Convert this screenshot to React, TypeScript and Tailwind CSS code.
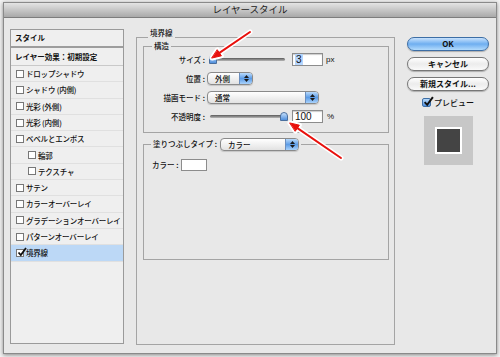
import type { ReactNode } from "react";

const items: { label: string; sub?: boolean; checked?: boolean }[] = [
  { label: "ドロップシャドウ" },
  { label: "シャドウ (内側)" },
  { label: "光彩 (外側)" },
  { label: "光彩 (内側)" },
  { label: "ベベルとエンボス" },
  { label: "輪郭", sub: true },
  { label: "テクスチャ", sub: true },
  { label: "サテン" },
  { label: "カラーオーバーレイ" },
  { label: "グラデーションオーバーレイ" },
  { label: "パターンオーバーレイ" },
  { label: "境界線", checked: true },
];

function Box({ checked }: { checked?: boolean }) {
  return (
    <span className="relative inline-block h-[8px] w-[8px] shrink-0 border border-[#777] bg-white">
      {checked && (
        <svg className="absolute -top-[3px] left-0 h-[10px] w-[10px]" viewBox="0 0 10 10">
          <path d="M1.5 5.5 L3.8 8 L9 1" fill="none" stroke="#111" strokeWidth="1.8" />
        </svg>
      )}
    </span>
  );
}

function Popup({ label, className }: { label: string; className: string }) {
  return (
    <div
      className={`flex h-[13px] items-stretch overflow-hidden rounded-[4px] border border-[#8a8a8a] bg-gradient-to-b from-white to-[#e2e2e2] shadow-[0_1px_1px_rgba(0,0,0,0.15)] ${className}`}
    >
      <span className="flex-1 whitespace-nowrap pl-[7px] text-[7.5px] font-medium leading-[11px]">{label}</span>
      <span className="flex w-[13px] flex-col items-center justify-center gap-[1px] border-l border-[#6b8fbf] bg-gradient-to-b from-[#b9dafb] via-[#5c9ce6] to-[#a9d2fb]">
        <svg width="5" height="3" viewBox="0 0 5 3">
          <path d="M0 3 L2.5 0 L5 3 Z" fill="#1a1a1a" />
        </svg>
        <svg width="5" height="3" viewBox="0 0 5 3">
          <path d="M0 0 L2.5 3 L5 0 Z" fill="#1a1a1a" />
        </svg>
      </span>
    </div>
  );
}

function Slider({ at }: { at: "start" | "end" }) {
  return (
    <div className="relative ml-[3px] h-[9px] w-[75px]">
      <div className="absolute left-0 right-0 top-[3px] h-[3px] rounded-full bg-gradient-to-b from-[#5a5a5a] to-[#b8b8b8]" />
      <div
        className={`absolute top-0 h-[9px] w-[8px] rounded-t-full rounded-b-[3px] border border-[#4a6f9e] bg-gradient-to-b from-[#c5e0fc] to-[#4f8fdc] ${at === "start" ? "left-[-1px]" : "right-[-3px]"}`}
      />
    </div>
  );
}

function Field({ value, selected }: { value: string; selected?: boolean }) {
  return (
    <div className="ml-[7px] flex h-[13px] w-[31px] items-center border border-[#8c8c8c] bg-white pl-[2px] shadow-[inset_0_1px_1px_rgba(0,0,0,0.2)] font-['Liberation_Sans',sans-serif] text-[10px] leading-[11px]">
      <span className={selected ? "bg-[#b5d5fd] px-[1px]" : ""}>{value}</span>
    </div>
  );
}

function Row({ label, children }: { label: string; children: ReactNode }) {
  return (
    <div className="flex h-[19px] items-center">
      <span className="w-[61px] shrink-0 whitespace-nowrap text-right text-[7.5px] font-medium">{label}</span>
      <div className="ml-[2px] flex items-center">{children}</div>
    </div>
  );
}

function PillButton({ children, primary }: { children: ReactNode; primary?: boolean }) {
  return (
    <div
      className={`flex h-[14px] w-[82px] items-center justify-center rounded-full border text-[8px] font-bold leading-none shadow-[0_1px_1px_rgba(0,0,0,0.25)] ${
        primary
          ? "border-[#3d6ea5] bg-gradient-to-b from-[#c8e2fc] via-[#6eaef0] to-[#b3dbfc]"
          : "border-[#777] bg-gradient-to-b from-white via-[#ececec] to-[#fafafa]"
      }`}
    >
      {children}
    </div>
  );
}

export default function App() {
  return (
    <div className="relative h-[357px] w-[500px] bg-[#f2f2f2] pl-[3px] pt-[2px] font-['Noto_Sans_CJK_JP',sans-serif] text-[#111]">
      <div className="flex h-[352px] w-[494px] flex-col border border-[#8a8a8a] bg-[#e8e8e8] shadow-[0_1px_4px_rgba(0,0,0,0.45)]">
        <div className="flex h-[15px] shrink-0 items-center justify-center border-b border-[#7d7d7d] bg-gradient-to-b from-[#e4e4e4] to-[#a9a9a9] text-[9.5px] leading-none text-[#222]">
          レイヤースタイル
        </div>

        <div className="flex flex-1 gap-[12px] pb-[8px] pl-[6px] pr-[7px] pt-[9px]">
          {/* left: style list */}
          <div className="mt-[2px] flex h-[315px] w-[114px] shrink-0 flex-col self-start border border-[#9a9a9a] bg-[#efefef] text-[7.5px] font-medium">
            <div className="flex h-[18px] shrink-0 items-center border-b-2 border-[#9d9d9d] pl-[4px] font-bold">
              スタイル
            </div>
            <div className="flex h-[18px] shrink-0 items-center border-b border-[#c9c9c9] pl-[4px] font-bold">
              レイヤー効果：初期設定
            </div>
            {items.map((it) => (
              <div
                key={it.label}
                className={`flex h-[16.3px] shrink-0 items-center gap-[2px] whitespace-nowrap border-b border-[#e0e0e0] ${it.sub ? "pl-[17px]" : "pl-[5px]"} ${it.checked ? "bg-[#bcd8f6]" : ""}`}
              >
                <Box checked={it.checked} />
                <span className="tracking-[-0.2px]">{it.label}</span>
              </div>
            ))}
          </div>

          {/* middle: stroke settings */}
          <fieldset className="flex w-[259px] shrink-0 flex-col border border-[#a4a4a4] pl-[6px] pr-[5px]">
            <legend className="ml-[5px] px-[2px] pb-[8px] text-[7.5px] font-medium leading-[12px]">境界線</legend>

            <fieldset className="-mt-[7px] border border-[#a4a4a4] pb-[6px]">
              <legend className="ml-[8px] px-[2px] text-[7.5px] font-medium leading-[12px]">構造</legend>
              <div className="-mt-[2px] flex flex-col">
                <Row label="サイズ :">
                  <Slider at="start" />
                  <Field value="3" selected />
                  <span className="ml-[3px] font-['Liberation_Sans',sans-serif] text-[8px]">px</span>
                </Row>
                <Row label="位置 :">
                  <Popup label="外側" className="w-[46px]" />
                </Row>
                <Row label="描画モード :">
                  <Popup label="通常" className="w-[112px]" />
                </Row>
                <Row label="不透明度 :">
                  <Slider at="end" />
                  <Field value="100" />
                  <span className="ml-[4px] font-['Liberation_Sans',sans-serif] text-[8px]">%</span>
                </Row>
              </div>
            </fieldset>

            <fieldset className="mt-[4px] h-[123px] border border-[#a4a4a4]">
              <legend className="ml-[7px] flex items-center px-[2px]">
                <span className="whitespace-nowrap text-[7.5px] font-medium leading-[14px]">塗りつぶしタイプ :</span>
                <Popup label="カラー" className="ml-[3px] w-[79px]" />
              </legend>
              <div className="flex items-center pl-[8px] pt-[8px]">
                <span className="text-[7.5px] font-medium">カラー :</span>
                <div className="ml-[3px] h-[12px] w-[26px] border border-[#8c8c8c] bg-white" />
              </div>
            </fieldset>
          </fieldset>

          {/* right: buttons */}
          <div className="flex w-[82px] shrink-0 flex-col items-center pt-[10px]">
            <PillButton primary>OK</PillButton>
            <div className="mt-[6px]">
              <PillButton>キャンセル</PillButton>
            </div>
            <div className="mt-[6px]">
              <PillButton>新規スタイル...</PillButton>
            </div>
            <div className="mt-[7px] flex items-center gap-[3px]">
              <span className="relative h-[9px] w-[9px] rounded-[2px] border border-[#3d6ea5] bg-gradient-to-b from-[#b8dafb] to-[#4f91e0]">
                <svg className="absolute -top-[3px] left-0 h-[11px] w-[11px]" viewBox="0 0 10 10">
                  <path d="M1.5 5.5 L3.8 8 L9 1" fill="none" stroke="#111" strokeWidth="1.8" />
                </svg>
              </span>
              <span className="text-[8px] font-medium leading-none">プレビュー</span>
            </div>
            <div className="mt-[9px] flex h-[49px] w-[49px] items-center justify-center bg-[#c7c7c7]">
              <div className="h-[27px] w-[27px] border-2 border-white bg-[#444]" />
            </div>
          </div>
        </div>
      </div>

      {/* annotation arrows */}
      <svg className="pointer-events-none absolute inset-0" width="500" height="357" viewBox="0 0 500 357">
        <g stroke="#fff" strokeWidth="5" strokeLinecap="round" strokeLinejoin="round" fill="#fff">
          <line x1="250" y1="32" x2="219.4" y2="52.9" />
          <polygon points="212,58 221.4,55.8 217.4,50" />
          <line x1="341" y1="158" x2="297.4" y2="128.1" />
          <polygon points="290,123 299.4,125.2 295.4,131" />
        </g>
        <g stroke="#e8100c" strokeWidth="2" strokeLinecap="round" fill="#e8100c">
          <line x1="250" y1="32" x2="219.4" y2="52.9" />
          <polygon points="212,58 221.4,55.8 217.4,50" strokeWidth="1" />
          <line x1="341" y1="158" x2="297.4" y2="128.1" />
          <polygon points="290,123 299.4,125.2 295.4,131" strokeWidth="1" />
        </g>
      </svg>
    </div>
  );
}
